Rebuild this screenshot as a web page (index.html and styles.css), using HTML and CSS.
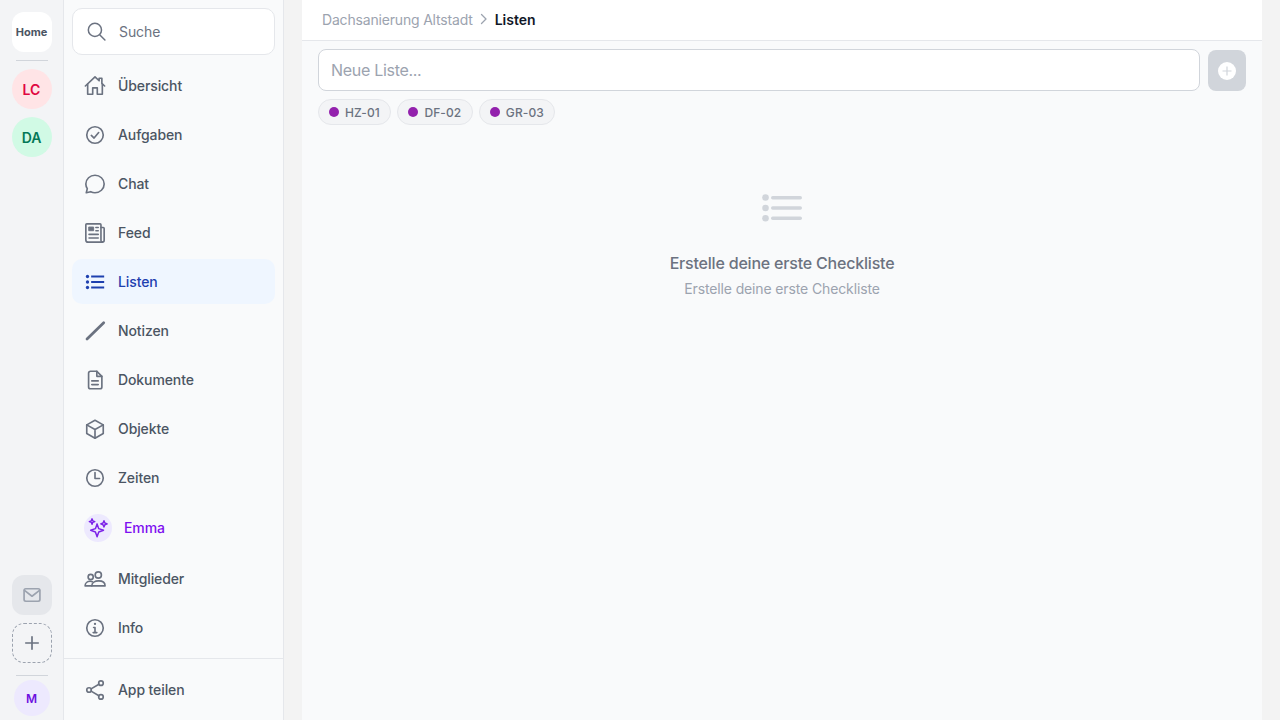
FILE: index.html
```html
<!DOCTYPE html>
<html lang="de">
<head>
<meta charset="utf-8">
<title>Listen</title>
<link rel="stylesheet" href="styles.css">
</head>
<body>
<div class="app">
  <aside class="rail">
    <div class="tile home">Home</div>
    <div class="rule"></div>
    <div class="tile round lc">LC</div>
    <div class="tile round da">DA</div>
    <div class="spacer"></div>
    <div class="tile mail">
      <svg width="20" height="20" viewBox="0 0 24 24" fill="none" stroke="#9ca3af" stroke-width="2" stroke-linejoin="round" stroke-linecap="round"><rect x="2.500" y="4.500" width="19" height="15" rx="2"/><path d="M3 6.500l9 7 9-7"/></svg>
    </div>
    <div class="tile add">
      <svg width="20" height="20" viewBox="0 0 24 24" fill="none" stroke="#6b7280" stroke-width="2" stroke-linecap="round"><path d="M12 4.500v15M4.500 12h15"/></svg>
    </div>
    <div class="rule low"></div>
    <div class="me">M</div>
  </aside>

  <nav class="side">
    <div class="search">
      <svg width="20" height="20" viewBox="0 0 24 24" fill="none" stroke="#6b7280" stroke-width="1.800" stroke-linecap="round"><circle cx="9.500" cy="9.500" r="7.900"/><path d="M15.500 15.500l6 6"/></svg>
      <span>Suche</span>
    </div>
    <div class="items">
      <a class="item"><svg class="ico" viewBox="0 0 24 24"><path d="M1.500 12L12 2l4.500 4.300V3.500h3v5.700L22.500 12"/><path d="M4 10v11h5.500v-7h5v7H20V10"/></svg><span>Übersicht</span></a>
      <a class="item"><svg class="ico" viewBox="0 0 24 24"><circle cx="12" cy="12" r="9"/><path d="M8 12.500l3 2.800 5-6"/></svg><span>Aufgaben</span></a>
      <a class="item"><svg class="ico" viewBox="0 0 24 24"><path d="M12 2.500c5.400 0 10 4 10 9.500s-4.600 9.500-10 9.500c-1.700 0-3.300-.4-4.700-1.100L2.500 21.500l1.100-4.500C2.600 15.500 2 13.800 2 12 2 6.500 6.600 2.500 12 2.500z"/></svg><span>Chat</span></a>
      <a class="item"><svg class="ico" viewBox="0 0 24 24"><path d="M18.500 6h2.500a1 1 0 0 1 1 1v13a2 2 0 0 1-2 2"/><path d="M20 22H4.500A2.500 2.500 0 0 1 2 19.500V3a1 1 0 0 1 1-1h14.500a1 1 0 0 1 1 1v17a2 2 0 0 0 1.500 2z"/><rect x="5.500" y="5.500" width="5" height="4" fill="#6b7280" stroke-width="1"/><path d="M13 6h2.500M13 9.500h2.500M5.500 13.500h10M5.500 17.500h10"/></svg><span>Feed</span></a>
      <a class="item active"><svg class="ico list" viewBox="0 0 24 24"><path d="M7.800 6H22M7.800 12H22M7.800 18H22"/><circle class="dot" cx="3.800" cy="6" r="1.800"/><circle class="dot" cx="3.800" cy="12" r="1.800"/><circle class="dot" cx="3.800" cy="18" r="1.800"/></svg><span>Listen</span></a>
      <a class="item"><svg class="ico thick" viewBox="0 0 24 24"><path d="M3.300 20.800L21.500 3"/></svg><span>Notizen</span></a>
      <a class="item"><svg class="ico" viewBox="0 0 24 24"><path d="M14 2.500H7a2 2 0 0 0-2 2v15a2 2 0 0 0 2 2h10.500a2 2 0 0 0 2-2V8z"/><path d="M14 2.500V8h5.500M8.500 13h7M8.500 17h7"/></svg><span>Dokumente</span></a>
      <a class="item"><svg class="ico" viewBox="0 0 24 24"><path d="M12 2.500l9 5v9.500l-9 5-9-5V7.500z"/><path d="M3 7.500l9 5 9-5M12 12.500V22"/></svg><span>Objekte</span></a>
      <a class="item"><svg class="ico" viewBox="0 0 24 24"><circle cx="12" cy="12" r="9"/><path d="M12 6v6.500h5"/></svg><span>Zeiten</span></a>
      <a class="item emma"><span class="spark"><svg width="22" height="22" viewBox="0 0 24 24" fill="none" stroke="#7c22e8" stroke-width="1.600" stroke-linejoin="round"><path d="M11 7.500l1.800 5.200 5.200 1.800-5.200 1.800L11 21.500l-1.800-5.200L4 14.500l5.200-1.800z"/><path d="M18.500 4l1 2.500 2.500 1-2.500 1-1 2.500-1-2.500-2.500-1 2.500-1z"/><path d="M5.500 2l.8 2.200 2.200.8-2.200.8-.8 2.200-.8-2.200L2.500 5l2.200-.8z"/></svg></span><span>Emma</span></a>
      <a class="item"><svg class="ico" viewBox="0 0 24 24"><circle cx="7.300" cy="9.800" r="2.800"/><circle cx="15.600" cy="7.600" r="3.400"/><path d="M1.200 19.500c0-3 2.500-5 5.500-5 .9 0 1.700.2 2.400.5M1.200 19.500H8.500"/><path d="M8.500 19.500c0-3.500 3.500-5.500 7.500-5.500s7 2 7 5.500z"/></svg><span>Mitglieder</span></a>
      <a class="item"><svg class="ico" viewBox="0 0 24 24"><circle cx="12" cy="12" r="9"/><path d="M10.500 11.500H12V17M10 17h4"/><path d="M12 7.500h.01" stroke-width="2.500"/></svg><span>Info</span></a>
    </div>
    <div class="share">
      <a class="item"><svg class="ico" viewBox="0 0 24 24"><circle cx="18.500" cy="4.500" r="2.500"/><circle cx="18.500" cy="19.500" r="2.500"/><circle cx="5.500" cy="12" r="2.500"/><path d="M7.700 10.800l8.600-5.100M7.700 13.200l8.600 5.100"/></svg><span>App teilen</span></a>
    </div>
  </nav>

  <div class="gutter"></div>

  <main class="main">
    <header class="crumbs">
      <span class="parent">Dachsanierung Altstadt</span>
      <svg class="chev" width="10" height="12" viewBox="0 0 10 12" fill="none" stroke="#9ca3af" stroke-width="1.300" stroke-linecap="round" stroke-linejoin="round"><path d="M2.500 1.500L7 6l-4.500 4.500"/></svg>
      <span class="current">Listen</span>
    </header>
    <section class="content">
      <div class="new-row">
        <div class="field">Neue Liste...</div>
        <div class="add-btn"><span class="add-dot"><svg width="10" height="10" viewBox="0 0 10 10" fill="none" stroke="#d1d5db" stroke-width="1.200"><path d="M5 .5v9M.5 5h9"/></svg></span></div>
      </div>
      <div class="chips">
        <span class="chip"><i></i>HZ-01</span>
        <span class="chip"><i></i>DF-02</span>
        <span class="chip"><i></i>GR-03</span>
      </div>
      <div class="empty">
        <svg width="40" height="30" viewBox="0 0 40 30" fill="#d1d5db"><circle cx="3.500" cy="3.500" r="3.300"/><circle cx="3.500" cy="14" r="3.300"/><circle cx="3.500" cy="24.300" r="3.300"/><rect x="9" y="2" width="31" height="3.400" rx="1.700"/><rect x="9" y="12.300" width="31" height="3.400" rx="1.700"/><rect x="9" y="22.600" width="31" height="3.400" rx="1.700"/></svg>
        <h2>Erstelle deine erste Checkliste</h2>
        <p>Erstelle deine erste Checkliste</p>
      </div>
    </section>
  </main>

  <div class="edge"></div>
</div>
</body>
</html>
```
FILE: styles.css
```css
* { box-sizing: border-box; }
html, body { margin: 0; height: 100%; overflow: hidden; }
body { font-family: Inter, "Liberation Sans", sans-serif; color: #4b5563; background: #f3f3f3; }
.app { display: flex; height: 720px; }

.rail { width: 64px; flex: none; background: #f3f4f6; border-right: 1px solid #e5e7eb; display: flex; flex-direction: column; align-items: center; padding: 12px 0 4px; gap: 8px; }
.tile { width: 40px; height: 40px; flex: none; display: flex; align-items: center; justify-content: center; border-radius: 12px; font-weight: 600; font-size: 14px; }
.home { background: #fff; color: #4b5563; font-size: 11px; font-weight: 700; }
.round { border-radius: 50%; }
.lc { background: #ffe4e6; color: #e0063f; }
.da { background: #d1fae5; color: #047857; }
.rule { width: 32px; height: 1px; background: #d1d5db; }
.low { margin-top: 4px; }
.spacer { flex: 1; }
.mail { background: #e5e7eb; }
.add { border: 1px dashed #9ca3af; }
.me { width: 36px; height: 36px; margin-top: -4px; border-radius: 50%; background: #ede9fe; color: #6d10e0; font-size: 12px; font-weight: 600; display: flex; align-items: center; justify-content: center; }

.side { width: 220px; flex: none; background: #f9fafb; border-right: 1px solid #e5e7eb; display: flex; flex-direction: column; }
.search { margin: 8px 8px 0; height: 47px; width: 203px; background: #fff; border: 1px solid #e5e7eb; border-radius: 10px; display: flex; align-items: center; gap: 12px; padding-left: 14px; font-size: 14px; letter-spacing: -.1px; color: #6b7280; }
.items { display: flex; flex-direction: column; gap: 4px; margin: 8px 8px 0; width: 203px; flex: 1; }
.item { height: 45px; display: flex; align-items: center; gap: 12px; padding-left: 12px; border-radius: 10px; font-size: 14px; font-weight: 500; letter-spacing: -.1px; color: #4b5563; flex: none; }
.ico { width: 22px; height: 22px; flex: none; fill: none; stroke: #6b7280; stroke-width: 1.800; stroke-linecap: round; stroke-linejoin: round; }
.thick { stroke-width: 3; }
.active { background: #eff6ff; color: #1e40af; }
.active .list { stroke: #1e40af; stroke-width: 2.400; stroke-linecap: butt; }
.active .dot { fill: #1e40af; stroke: none; }
.emma { height: 47px; margin-bottom: 1px; color: #7e0ff0; gap: 12px; }
.spark { width: 28px; height: 28px; border-radius: 50%; background: #ede9fe; display: flex; align-items: center; justify-content: center; }
.share { border-top: 1px solid #e5e7eb; padding: 8px 8px 7px; height: 62px; }

.gutter { width: 18px; flex: none; }
.edge { width: 18px; flex: none; }

.main { flex: 1; min-width: 0; background: #f9fafb; display: flex; flex-direction: column; }
.crumbs { height: 41px; flex: none; background: #fff; border-bottom: 1px solid #e5e7eb; display: flex; align-items: center; padding: 0 0 2px 20px; font-size: 14px; }
.parent { color: #9ca3af; letter-spacing: -.18px; }
.chev { margin: 0 6px; }
.current { color: #111827; font-weight: 600; }
.content { padding: 8px 16px; flex: 1; display: flex; flex-direction: column; }
.new-row { display: flex; gap: 8px; align-items: flex-start; }
.field { flex: 1; height: 42px; background: #fff; border: 1px solid #d1d5db; border-radius: 8px; padding-left: 12px; display: flex; align-items: center; font-size: 16px; letter-spacing: -.3px; color: #9ca3af; }
.add-btn { width: 38px; height: 41px; margin-top: 1px; border-radius: 8px; background: #d1d5db; display: flex; align-items: center; justify-content: center; }
.add-dot { width: 18px; height: 18px; border-radius: 50%; background: #fff; display: flex; align-items: center; justify-content: center; }
.chips { display: flex; gap: 6px; margin-top: 8px; }
.chip { height: 26px; padding: 0 10.500px 0 10px; border-radius: 13px; background: #f3f4f6; border: 1px solid #e5e7eb; display: flex; align-items: center; gap: 6px; font-size: 12px; font-weight: 500; color: #6b7280; letter-spacing: .1px; }
.chip i { width: 10px; height: 10px; border-radius: 50%; background: #9321ad; }
.empty { display: flex; flex-direction: column; align-items: center; margin-top: 69px; }
.empty h2 { margin: 27px 0 0; font-size: 16px; line-height: 24px; font-weight: 500; letter-spacing: -.2px; color: #6b7280; }
.empty p { margin: 4px 0 0; font-size: 14px; line-height: 20px; letter-spacing: -.13px; color: #9ca3af; }
```
